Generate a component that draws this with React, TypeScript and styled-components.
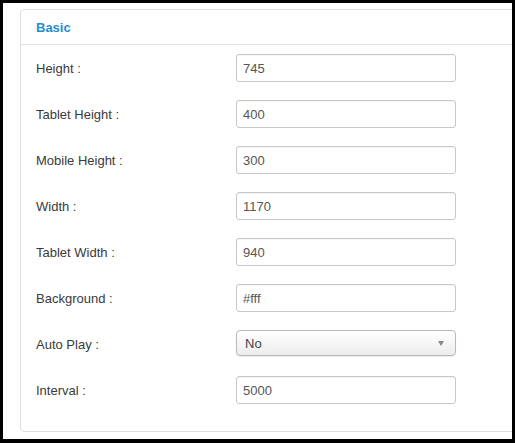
import React from "react";
import styled, { createGlobalStyle } from "styled-components";

const Global = createGlobalStyle`
  html, body { margin: 0; padding: 0; background: #000; }
  body { font-family: Arial, "Liberation Sans", Helvetica, sans-serif; }
`;

const Frame = styled.div`
  width: 515px;
  height: 443px;
  box-sizing: border-box;
  padding: 3px 3px 4px 3px;
  background: #000;
`;

const Canvas = styled.div`
  width: 100%;
  height: 100%;
  background: #fff;
  box-sizing: border-box;
  padding: 6px 0 0 17px;
  overflow: hidden;
`;

const Panel = styled.section`
  width: 520px;
  box-sizing: border-box;
  border: 1px solid #dedede;
  border-radius: 4px;
  background: #fff;
`;

const Header = styled.div`
  height: 34px;
  border-bottom: 1px solid #e3e3e3;
  display: flex;
  align-items: center;
  padding-left: 15px;
  font-family: "Liberation Sans", Arial, sans-serif;
  font-size: 13px;
  font-weight: bold;
  color: #1f8ed4;
`;

const Body = styled.div`
  padding: 9px 0 27px 15px;
  display: flex;
  flex-direction: column;
  gap: 18px;
`;

const Row = styled.div`
  display: grid;
  grid-template-columns: 200px 220px;
  align-items: center;
  height: 28px;
`;

const Label = styled.label`
  font-family: "Liberation Sans", Arial, sans-serif;
  font-size: 13px;
  color: #3a3a3a;
`;

const Field = styled.div`
  height: 28px;
  box-sizing: border-box;
  border: 1px solid #c8c8c8;
  border-radius: 3px;
  display: flex;
  align-items: center;
  padding-left: 6px;
  font-family: "Liberation Sans", Arial, sans-serif;
  font-size: 13px;
  color: #555;
  background: #fff;
  box-shadow: inset 0 1px 1px rgba(0, 0, 0, 0.04);
`;

const Select = styled.div`
  height: 26px;
  margin-top: -2px;
  box-sizing: border-box;
  border: 1px solid #b9b9b9;
  border-radius: 4px;
  display: flex;
  align-items: center;
  justify-content: space-between;
  padding: 0 11px 0 8px;
  font-family: "Liberation Sans", Arial, sans-serif;
  font-size: 13px;
  color: #444;
  background: linear-gradient(#ffffff 0%, #f6f6f6 50%, #ececec 100%);
  box-shadow: 0 1px 1px rgba(0, 0, 0, 0.08);
`;

const Arrow = styled.span`
  width: 0;
  height: 0;
  border-left: 3.5px solid transparent;
  border-right: 3.5px solid transparent;
  border-top: 5px solid #888;
`;

type Item = { label: string; value: string; select?: boolean };

const items: Item[] = [
  { label: "Height :", value: "745" },
  { label: "Tablet Height :", value: "400" },
  { label: "Mobile Height :", value: "300" },
  { label: "Width :", value: "1170" },
  { label: "Tablet Width :", value: "940" },
  { label: "Background :", value: "#fff" },
  { label: "Auto Play :", value: "No", select: true },
  { label: "Interval :", value: "5000" },
];

export default function App() {
  return (
    <>
      <Global />
      <Frame>
        <Canvas>
          <Panel>
            <Header>Basic</Header>
            <Body>
              {items.map((it) => (
                <Row key={it.label}>
                  <Label>{it.label}</Label>
                  {it.select ? (
                    <Select>
                      <span>{it.value}</span>
                      <Arrow />
                    </Select>
                  ) : (
                    <Field>{it.value}</Field>
                  )}
                </Row>
              ))}
            </Body>
          </Panel>
        </Canvas>
      </Frame>
    </>
  );
}
